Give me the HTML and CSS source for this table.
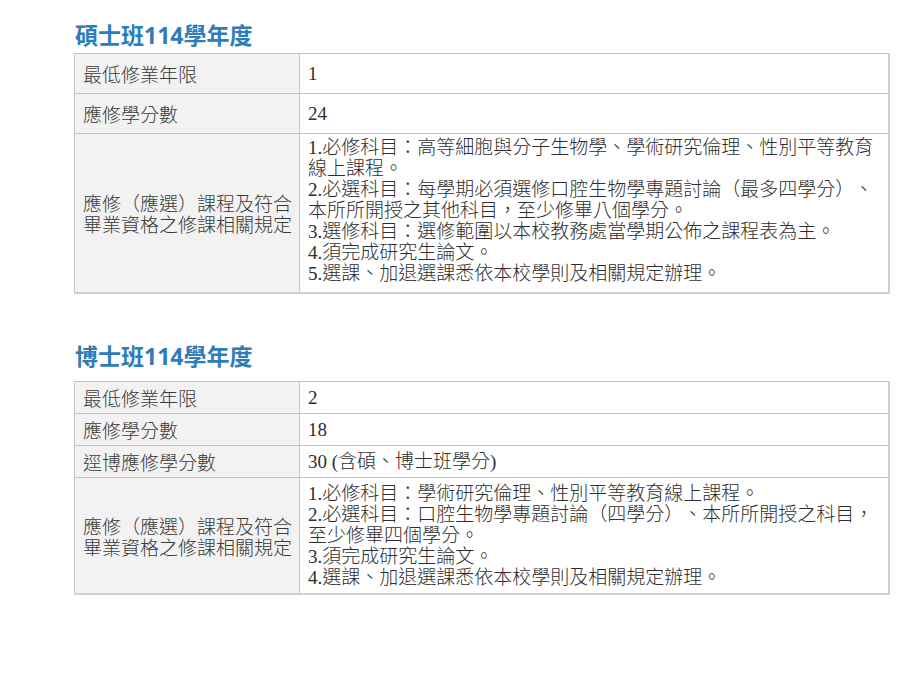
FILE: index.html
```html
<!DOCTYPE html>
<html lang="zh-Hant">
<head>
<meta charset="utf-8">
<title>修業規定</title>
<link rel="stylesheet" href="styles.css">
</head>
<body>
<main class="page">
  <section class="block block-master">
    <h2 class="title">碩士班114學年度</h2>
    <table class="rules rules-tall">
      <tr>
        <th class="label">最低修業年限</th>
        <td class="value">1</td>
      </tr>
      <tr>
        <th class="label">應修學分數</th>
        <td class="value">24</td>
      </tr>
      <tr>
        <th class="label">應修（應選）課程及符合畢業資格之修課相關規定</th>
        <td class="value multi">1.必修科目：高等細胞與分子生物學、學術研究倫理、性別平等教育線上課程。<br>2.必選科目：每學期必須選修口腔生物學專題討論（最多四學分）、本所所開授之其他科目，至少修畢八個學分。<br>3.選修科目：選修範圍以本校教務處當學期公佈之課程表為主。<br>4.須完成研究生論文。<br>5.選課、加退選課悉依本校學則及相關規定辦理。</td>
      </tr>
    </table>
  </section>

  <section class="block block-doctor">
    <h2 class="title title-second">博士班114學年度</h2>
    <table class="rules">
      <tr>
        <th class="label">最低修業年限</th>
        <td class="value">2</td>
      </tr>
      <tr>
        <th class="label">應修學分數</th>
        <td class="value">18</td>
      </tr>
      <tr>
        <th class="label">逕博應修學分數</th>
        <td class="value">30 (含碩、博士班學分)</td>
      </tr>
      <tr>
        <th class="label">應修（應選）課程及符合畢業資格之修課相關規定</th>
        <td class="value multi">1.必修科目：學術研究倫理、性別平等教育線上課程。<br>2.必選科目：口腔生物學專題討論（四學分）、本所所開授之科目，至少修畢四個學分。<br>3.須完成研究生論文。<br>4.選課、加退選課悉依本校學則及相關規定辦理。</td>
      </tr>
    </table>
  </section>
</main>
</body>
</html>
```

FILE: styles.css
```css
html, body {
  margin: 0;
  padding: 0;
  background: #ffffff;
}

.page {
  width: 816px;
  padding: 20px 0 0 74px;
}

.title {
  margin: 0 0 3px 1px;
  font-family: "Noto Sans", "Noto Sans CJK TC", sans-serif;
  font-weight: 700;
  font-size: 23px;
  line-height: 30px;
  color: #2e7cba;
}

.title-second {
  margin-top: 47px;
  margin-bottom: 10px;
}

.rules {
  width: 816px;
  border-collapse: collapse;
  border-right: 2px solid #d0d0d0;
  border-bottom: 2px solid #d0d0d0;
  font-family: "Liberation Serif", "Noto Sans CJK TC", serif;
  font-size: 19px;
  line-height: 21px;
  color: #333333;
  text-spacing-trim: space-all;
}

.rules th,
.rules td {
  border: 1px solid #c4c4c4;
  padding: 5px 8px 5px;
  text-align: left;
  vertical-align: middle;
  font-weight: 300;
}

.label {
  width: 210px;
  padding-right: 6px !important;
  background: #f2f2f2;
  font-family: "Noto Sans CJK TC", sans-serif;
  color: #3a3a3a;
}

.value {
  background: #ffffff;
  color: #2e2e2e;
}

.rules-tall th,
.rules-tall td {
  height: 29px;
}

.rules-tall .multi {
  height: auto;
  padding-top: 3px;
  padding-bottom: 8px;
}

.multi {
  padding-top: 4px;
  padding-bottom: 3px;
}
```
